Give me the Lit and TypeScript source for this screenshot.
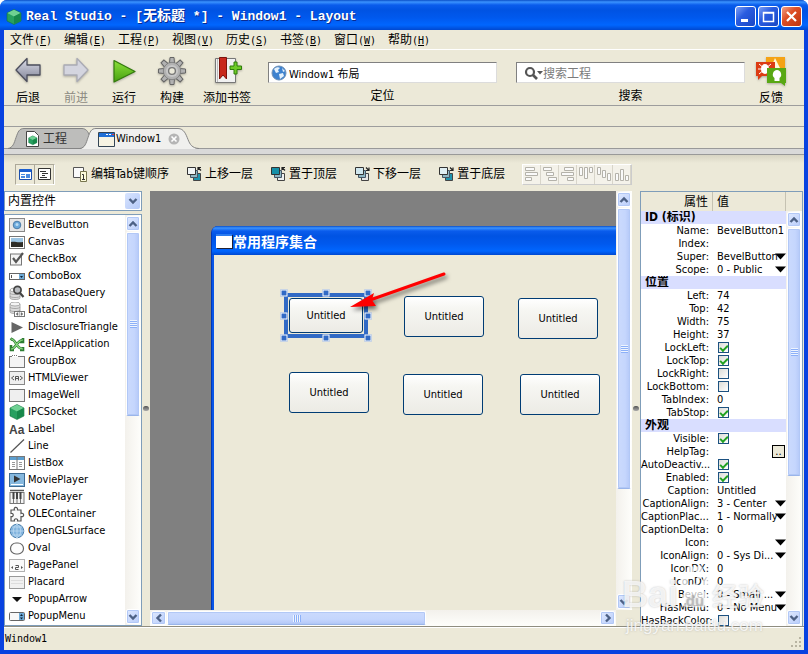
import { LitElement, html, css, svg, nothing } from "lit";
import { customElement, property } from "lit/decorators.js";
import { classMap } from "lit/directives/class-map.js";
import { styleMap } from "lit/directives/style-map.js";

const chevron = svg`<path d="M1.500 6 5 2.500 8.500 6" fill="none" stroke="#4d6185" stroke-width="2.400"/>`;

@customElement("xp-scrollbar")
class XpScrollbar extends LitElement {
  @property({ type: Boolean, reflect: true }) horizontal = false;
  @property({ type: Number }) share = 50;

  static styles = css`
    :host { display: flex; flex-direction: column; width: 16px; flex: none; min-height: 0;
      background: linear-gradient(90deg, #f3f1ec, #fefefb); box-sizing: border-box; padding: 1px; gap: 1px; }
    :host([horizontal]) { flex-direction: row; width: auto; height: 16px; background: linear-gradient(#f3f1ec, #fefefb); }
    button, .thumb { box-sizing: border-box; border: 1px solid #fff; border-radius: 2px;
      box-shadow: inset 0 0 0 1px #b2c8f6; }
    button { width: 14px; height: 15px; flex: none; padding: 0; display: grid; place-items: center;
      background: linear-gradient(135deg, #dfe9ff, #b9cdfa); }
    :host([horizontal]) button { width: 15px; height: 14px; }
    svg { width: 10px; height: 8px; display: block; }
    .down svg { transform: rotate(180deg); }
    :host([horizontal]) .up svg { transform: rotate(-90deg); }
    :host([horizontal]) .down svg { transform: rotate(90deg); }
    .track { flex: 1; min-height: 0; min-width: 0; display: flex; flex-direction: inherit; }
    .thumb { display: grid; place-items: center; background: linear-gradient(90deg, #cbdafd, #c5d6fd 60%, #b4c8f8);
      border-bottom-color: #9ab5ea; }
    :host([horizontal]) .thumb { background: linear-gradient(#cbdafd, #c5d6fd 60%, #b4c8f8); }
    .grip { width: 7px; height: 8px; background: repeating-linear-gradient(#eef4fe 0 1px, #8cb0f8 1px 2px); }
    :host([horizontal]) .grip { width: 8px; height: 7px; background: repeating-linear-gradient(90deg, #eef4fe 0 1px, #8cb0f8 1px 2px); }
  `;

  render() {
    return html`
      <button class="up" aria-label="Scroll back"><svg viewBox="0 0 10 8">${chevron}</svg></button>
      <div class="track"><div class="thumb" style=${styleMap({ flexBasis: this.share + "%" })}><div class="grip"></div></div></div>
      <button class="down" aria-label="Scroll forward"><svg viewBox="0 0 10 8">${chevron}</svg></button>`;
  }
}

const cube = svg`<path d="M8 .5 15 4v8l-7 3.500L1 12V4z" fill="#27a060" stroke="#13703c" stroke-width=".6"/><path d="M8 .8 14.700 4 8 7.500 1.300 4z" fill="#6fd193"/><path d="M8 7.500V15l6.700-3.300V4z" fill="#17884a"/>`;
const db = svg`<path d="M1 5v8c0 2 10 2 10 0V5" fill="#ddd" stroke="#999" stroke-width=".8"/><ellipse cx="6" cy="5" rx="5" ry="2" fill="#f5f5f5" stroke="#999" stroke-width=".8"/><path d="M1 8c0 2 10 2 10 0M1 11c0 2 10 2 10 0" fill="none" stroke="#999" stroke-width=".8"/>`;

const widgets: [string, unknown][] = [
  ["BevelButton", svg`<rect x=".5" y="1.500" width="15" height="13" fill="#e6e6e6" stroke="#888"/><circle cx="8" cy="8" r="3.800" fill="#6aa9dc" stroke="#4c7ba6"/><circle cx="8" cy="7.500" r="1.500" fill="#b9dbf3"/>`],
  ["Canvas", svg`<rect x=".5" y="2.500" width="15" height="12" fill="#fff" stroke="#777"/><path d="M2 4h12v5H2z" fill="#9cc4e2"/><path d="M2 8c4-1 6 1 12 0v5H2z" fill="#2e2c26"/>`],
  ["CheckBox", svg`<rect x="1.500" y="3" width="11" height="11" fill="#f4f4f4" stroke="#777"/><path d="m4 7 3 4 7-9" fill="none" stroke="#555" stroke-width="2.200"/>`],
  ["ComboBox", svg`<rect x=".5" y="5.500" width="15" height="6" fill="#fff" stroke="#666"/><path d="M10 6h5v5h-5z" fill="#6eaad6"/><path d="m11 8 1.500 2L14 8z" fill="#123"/><path d="M2.500 7v3" stroke="#555"/>`],
  ["DatabaseQuery", svg`${db}<circle cx="8.500" cy="5" r="3.600" fill="#b9bcc0" stroke="#444" stroke-width="1.700"/><path d="m11 8 3.500 4" stroke="#444" stroke-width="2.200"/>`],
  ["DataControl", svg`<g transform="translate(0 -3)">${db}</g><rect x="5.500" y="9.500" width="10" height="5" fill="#fff" stroke="#777"/><path d="M10.500 9v6M9 10.500 7 12l2 1.500zM12 10.500l2 1.500-2 1.500z" fill="#666" stroke="#777" stroke-width=".5"/>`],
  ["DisclosureTriangle", svg`<path d="M2.500 3v11L14 8.500z" fill="#666"/>`],
  ["ExcelApplication", svg`<path d="M2 3c5 0 5 10 12 10M2 13c5 0 6-9 12-9M1.500 4l2-1.500M2 9v5h3M14 2v4h-3M11 14h3v-3" fill="none" stroke="#2e7d32" stroke-width="2.600"/><path d="M2 3c5 0 5 10 12 10M2 13c5 0 6-9 12-9" fill="none" stroke="#8fdc83" stroke-width="1.200"/>`],
  ["GroupBox", svg`<rect x=".5" y="3.500" width="15" height="11" fill="#f4f4f4" stroke="#777"/><path d="M3 3.500h6" stroke="#fff"/><path d="M3 2.500h5" stroke="#777" stroke-dasharray="1 1"/>`],
  ["HTMLViewer", svg`<rect x=".5" y="1.500" width="15" height="13" fill="#efefef" stroke="#888"/><path d="M5 6 2.500 8 5 10M11 6l2.500 2L11 10M6.500 10.500v-4h3v4M6.500 8.500h3" fill="none" stroke="#555"/>`],
  ["ImageWell", svg`<rect x=".5" y="2.500" width="15" height="12" fill="#efefef" stroke="#777"/>`],
  ["IPCSocket", cube],
  ["Label", svg`<text x="0" y="12.500" font-family="Liberation Sans, sans-serif" font-weight="bold" font-size="12" fill="#444">Aa</text>`],
  ["Line", svg`<path d="M1.500 14.500 15 1.500" stroke="#555" stroke-width="1.200"/>`],
  ["ListBox", svg`<rect x=".5" y="1.500" width="15" height="13" fill="#fff" stroke="#777"/><path d="M1 2h14v3H1z" fill="#5c9fd0"/><path d="M8 2v12" stroke="#777"/><path d="M3 7.500h3M3 9.500h3M3 11.500h3M10 7.500h3M10 9.500h3M10 11.500h3" stroke="#999"/>`],
  ["MoviePlayer", svg`<rect x=".5" y="1.500" width="15" height="13" fill="#86b8de" stroke="#3d6b93"/><path d="M5 3.500v7L11.500 7z" fill="#333"/><path d="M2 12.500h12" stroke="#fff"/>`],
  ["NotePlayer", svg`<path d="M1 1.500h14" stroke="#555" stroke-width="1.500"/><rect x="1" y="3.500" width="14" height="11" fill="#f4f4f4" stroke="#777"/><path d="M4.500 3v7M8 3v7M11.500 3v7" stroke="#444" stroke-width="2"/><path d="M4.500 10v5M8 10v5M11.500 10v5" stroke="#777"/>`],
  ["OLEContainer", svg`<path d="M2 4h3.500C4 1 9 0 8.500 4H12v3.500c3-1.500 4 4 0 3V15H8.500c1-3-4-3-3 0H2v-4.500c3 .5 3-3.500 0-3z" fill="#fafafa" stroke="#555" stroke-width="1.200"/>`],
  ["OpenGLSurface", svg`<circle cx="8" cy="8" r="6.800" fill="#82b4de" stroke="#4b7fac"/><path d="M1 8h14M3 4h10M3 12h10M8 1v14M8 1c-5 4-5 10 0 14M8 1c5 4 5 10 0 14" fill="none" stroke="#c5e0f5" stroke-width=".7"/>`],
  ["Oval", svg`<rect x="1.500" y="3" width="13" height="11" rx="5.500" fill="#fdfdfd" stroke="#666" stroke-width="1.200"/>`],
  ["PagePanel", svg`<rect x=".5" y="2.500" width="15" height="12" fill="#fafafa" stroke="#666" stroke-dasharray="1 1"/><path d="M4 9 2 10.500 4 12zM12 9l2 1.500-2 1.500z" fill="#555"/><path d="M6.500 8.500h3v2h-3v2h3" fill="none" stroke="#555"/>`],
  ["Placard", svg`<rect x=".5" y="2.500" width="15" height="12" fill="#f1f1f1" stroke="#999"/><path d="M2 6.500h12M2 9.500h12" stroke="#ddd"/>`],
  ["PopupArrow", svg`<path d="M3 6h10l-5 5z" fill="#111"/>`],
  ["PopupMenu", svg`<rect x=".5" y="4.500" width="15" height="8" rx="1" fill="#f8f8f8" stroke="#666"/><path d="M10 5h5v7h-5z" fill="#6eaad6"/><path d="m11 8 1.500-2L14 8zM11 9.500l1.500 2 1.500-2z" fill="#123"/>`],
];

type Kind = "text" | "list" | "check" | "more";
const properties: { title: string; rows: [string, Kind, string][] }[] = [
  { title: "ID (标识)", rows: [["Name", "text", "BevelButton1"], ["Index", "text", ""], ["Super", "list", "BevelButton"], ["Scope", "list", "0 - Public"]] },
  { title: "位置", rows: [["Left", "text", "74"], ["Top", "text", "42"], ["Width", "text", "75"], ["Height", "text", "37"], ["LockLeft", "check", "on"], ["LockTop", "check", "on"], ["LockRight", "check", ""], ["LockBottom", "check", ""], ["TabIndex", "text", "0"], ["TabStop", "check", "on"]] },
  { title: "外观", rows: [["Visible", "check", "on"], ["HelpTag", "more", ""], ["AutoDeactiv...", "check", "on"], ["Enabled", "check", "on"], ["Caption", "text", "Untitled"], ["CaptionAlign", "list", "3 - Center"], ["CaptionPlac...", "list", "1 - Normally"], ["CaptionDelta", "text", "0"], ["Icon", "list", ""], ["IconAlign", "list", "0 - Sys Di..."], ["IconDX", "text", "0"], ["IconDY", "text", "0"], ["Bevel", "list", "0 - Small ..."], ["HasMenu", "list", "0 - No Menu"], ["HasBackColor", "check", ""]] },
];

const menus = [["文件", "F"], ["编辑", "E"], ["工程", "P"], ["视图", "V"], ["历史", "S"], ["书签", "B"], ["窗口", "W"], ["帮助", "H"]];

const gearTeeth = [0, 45, 90, 135, 180, 225, 270, 315];
const mainTools: { label: string; off?: boolean; icon: unknown }[] = [
  { label: "后退", icon: svg`<path d="M3 14 14 2.500V9h13v10H14v6.500z" fill="url(#steel)" stroke="#4b4d5c" stroke-width="1.300" stroke-linejoin="round"/>` },
  { label: "前进", off: true, icon: svg`<path d="M27 14 16 2.500V9H3v10h13v6.500z" fill="#d4d5df" stroke="#a9aab4" stroke-width="1.300" stroke-linejoin="round"/>` },
  { label: "运行", icon: svg`<path d="M5 4.500 26 15.500 5 26z" fill="url(#leaf)" stroke="#327a0c" stroke-width="1.200" stroke-linejoin="round"/>` },
  { label: "构建", icon: svg`<g fill="#b2b2b2" stroke="#666">${gearTeeth.map((a) => svg`<path d="M12.500 7 13 1.500h4l.5 5.500z" transform=${`rotate(${a} 15 15)`}/>`)}</g><circle cx="15" cy="15" r="8.700" fill="#b2b2b2" stroke="#777" stroke-width=".7"/><circle cx="15" cy="15" r="6" fill="#c8c8c8"/><circle cx="15" cy="15" r="3.400" fill="#ebe9da" stroke="#777" stroke-width="1.400"/>` },
  { label: "添加书签", icon: svg`<path d="M3.500 2.500h20v24h-20z" fill="#f1f1f1" stroke="#777"/><path d="M5.500 3v23" stroke="#bbb"/><path d="M7.500 1.500h7V23L11 19l-3.500 4z" fill="#c8281c" stroke="#7d130d"/><path d="M22 6h3v4h4.500v3.500H25V18h-3v-4.500h-4V10h4z" fill="#6ecb26" stroke="#2f7d0a"/>` },
];

const layerIcon = (back: string, front: string, arrow: string) => svg`
  <path d="M7.500 7.500h7v7h-7z" fill=${front} stroke="#444"/>
  <path d="M4.500 4.500h7v7h-7z" fill="#8fb6c3" stroke="#456"/>
  <path d="M1.500 1.500h8v7h-8z" fill=${back} stroke="#333"/>
  <path d=${arrow} fill="none" stroke="#222" stroke-width="1.200"/>`;
const upArrow = "M12 4V1.500h3M12 1.500l3 3";
const dnArrow = "M12 1.500l3 3M15 1.500v3h-3";
const layerTools: { label: string; icon: unknown }[] = [
  { label: "编辑Tab键顺序", icon: svg`<path d="M1.500 1.500h10v10h-10z" fill="#fafafa" stroke="#555"/><path d="M8.500 5.500h6v10h-6z" fill="#fdfbdc" stroke="#77754f"/><path d="M10 8.500h1.500V13M10 13.500h3" fill="none" stroke="#333"/>` },
  { label: "上移一层", icon: layerIcon("#f0f4f5", "#1d94ae", upArrow) },
  { label: "置于顶层", icon: layerIcon("#1690a8", "#eef1f2", upArrow) },
  { label: "下移一层", icon: layerIcon("#cfe6ee", "#e6e6e6", dnArrow) },
  { label: "置于底层", icon: layerIcon("#dfeef3", "#1d94ae", dnArrow) },
];

const alignTools: [string, string][] = [
  ["Align left", "M1.500 1.500h9v3h-9zM1.500 6.500h12v3h-12zM1.500 11.500h6v3h-6z"],
  ["Align centre", "M1.500 1.500h8v3h-8zM4.500 6.500h7v3h-7zM6.500 11.500h8v3h-8z"],
  ["Align right", "M4.500 1.500h9v3h-9zM1.500 6.500h12v3h-12zM7.500 11.500h6v3h-6z"],
  ["Align top", "M1.500 1.500h3v8h-3zM6.500 1.500h3v11h-3zM11.500 1.500h3v5h-3z"],
  ["Align middle", "M1.500 1.500h3v7h-3zM6.500 4.500h3v7h-3zM11.500 7.500h3v7h-3z"],
  ["Align bottom", "M1.500 7.500h3v7h-3zM6.500 3.500h3v11h-3zM11.500 9.500h3v5h-3z"],
];

const placed = [
  { x: 75, y: 43, w: 74, h: 35, picked: true },
  { x: 190, y: 41, w: 80, h: 41 },
  { x: 304, y: 43, w: 80, h: 41 },
  { x: 75, y: 117, w: 80, h: 41 },
  { x: 189, y: 119, w: 80, h: 41 },
  { x: 306, y: 119, w: 80, h: 41 },
];
const handles = [[0, 0], [50, 0], [100, 0], [0, 50], [100, 50], [0, 100], [50, 100], [100, 100]];

@customElement("app-root")
class AppRoot extends LitElement {
  static styles = css`
    :host { display: block; --face: #ece9d8; --ui: "DejaVu Sans Condensed", "DejaVu Sans", "Noto Sans CJK SC", sans-serif;
      font: 12px/16px "Liberation Sans", "Noto Sans CJK SC", sans-serif; color: #000; }
    * { box-sizing: border-box; }
    button, input, select { font: inherit; color: inherit; margin: 0; padding: 0; border: 0; background: none; border-radius: 0; }
    svg { display: block; flex: none; }
    .frame { height: 100vh; display: flex; flex-direction: column; background: #0842e0; overflow: hidden;
      border-radius: 7px 7px 0 0; position: relative; }
    .defs { position: absolute; width: 0; height: 0; }

    .title { height: 30px; flex: none; display: flex; align-items: center; padding: 3px 6px 0; gap: 2px; color: #fff;
      background: linear-gradient(#0a4fc8 0, #3b93ff 2px, #0a5cec 5px, #0053e3 10px, #0059ee 18px, #0066ff 25px, #0048d0 30px); }
    .title h1 { flex: 1; margin: 0 0 0 2px; font: bold 13px/20px "Liberation Mono", "Noto Sans CJK SC", monospace; text-shadow: 1px 1px #0a2a90; white-space: pre; }
    .title h1 span { font-size: 14px; }
    .caption { width: 21px; height: 21px; border: 1px solid #fff; border-radius: 3px; display: grid; place-items: center;
      background: linear-gradient(135deg, #7c9ff5, #2a5ce0 40%, #1846c4); }
    .caption.close { background: linear-gradient(135deg, #f0a088, #de4f26 40%, #bf3510); }

    .client { flex: 1; min-height: 0; margin: 0 4px 4px; display: flex; flex-direction: column; background: var(--face); }
    .menu { display: flex; gap: 12px; height: 20px; flex: none; padding: 0 6px; border-bottom: 1px solid #fff; align-items: center; }
    .menu button { width: 42px; text-align: left; white-space: nowrap; line-height: 18px; }
    .menu i { font: 10px/16px "DejaVu Sans Mono", monospace; }

    .tools { display: flex; height: 56px; flex: none; border-bottom: 1px solid #9d9d9d; padding-right: 9px; }
    .tool { width: 48px; display: flex; flex-direction: column; align-items: center; padding: 6px 0 0; gap: 4px; line-height: 16px; white-space: nowrap; }
    .tool svg { filter: drop-shadow(0 1px 1px #0004); }
    .tool.wide { width: 62px; }
    .tool.off { color: #8d8b82; }
    .field { flex: 1; min-width: 0; display: flex; flex-direction: column; padding-top: 12px; gap: 5px; text-align: center; }
    .tools .field { margin-left: 10px; }
    .tools .field + .field { margin: 0 2px 0 19px; }
    .box { display: flex; align-items: center; height: 21px; padding: 0 2px; gap: 2px; background: #fff; border: 1px solid #dcdcdc; border-top-color: #808080; border-left-color: #808080; }
    .box input { flex: 1; min-width: 0; font-family: var(--ui); font-size: 11px; height: 18px; outline: 0; }
    .box.search { padding-left: 7px; gap: 0; }
    .box.search input { font: 12px/18px "Noto Sans CJK SC", sans-serif; }
    .box input::placeholder { color: #7b7b7b; opacity: 1; }
    .gap { height: 21px; flex: none; border-bottom: 1px solid #9d9d9d; }
    .tabs { height: 22px; flex: none; display: flex; padding-left: 4px; border-bottom: 1px solid #999; }
    .tab { position: relative; height: 22px; display: flex; align-items: center; padding-top: 2px; white-space: nowrap; }
    .tab .shape { position: absolute; left: 0; top: 0; }
    .tab > :not(.shape) { position: relative; }
    .tab.rest { width: 82px; padding-left: 17px; gap: 3px; color: #333; }
    .tab.live { width: 120px; margin-left: -10px; padding-left: 18px; gap: 1px; font: 11px/16px var(--ui); }
    .tab.live .x { margin-left: 6px; }
    .band { height: 6px; flex: none; background: #d9d9d9; border-bottom: 1px solid #999; }

    .layers { height: 36px; flex: none; display: flex; align-items: center; gap: 17px; padding: 2px 11px 0; background: linear-gradient(#d8d5c4, var(--face) 8px); }
    .views, .aligns { display: flex; height: 21px; border: 1px solid; border-color: #aca899 #fff #fff #aca899; }
    .views button { width: 19px; display: grid; place-items: center; border-right: 1px solid #aca899; }
    .views button + button { border-color: #b9b6a6; }
    .layer { display: flex; align-items: center; gap: 2px; height: 22px; white-space: nowrap; font: 12px/16px "DejaVu Sans Condensed", "Noto Sans CJK SC", sans-serif; }
    .aligns { border-color: #fff #ccc #ccc #fff; background: #f4f2ea; }
    .aligns button { width: 18px; display: grid; place-items: center; border-right: 1px solid #d8d5ca; }

    .main { flex: 1; min-height: 0; display: grid; grid-template-columns: 138px 8px minmax(0, 1fr) 8px 163px; padding-right: 1px; border-bottom: 1px solid #8f8d80; }
    .left { display: flex; flex-direction: column; gap: 3px; min-height: 0; }
    .combo { position: relative; height: 20px; flex: none; border: 1px solid #7f9db9; background: #fff; }
    .combo select { appearance: none; width: 100%; height: 18px; padding-left: 3px; }
    .combo .drop { position: absolute; right: 1px; top: 1px; width: 15px; height: 16px; border-radius: 2px; display: grid; place-items: center; background: linear-gradient(135deg, #d8e4fe, #b4c9f8); pointer-events: none; }
    .drop svg { transform: rotate(180deg); }
    .list { flex: 1; min-height: 0; display: flex; border: 1px solid #7f9db9; background: #fff; }
    .list ul { flex: 1; min-width: 0; margin: 0; padding: 1px 0 0; list-style: none; overflow: hidden; }
    .list li button { display: flex; align-items: center; gap: 3px; height: 17px; width: 100%; padding-left: 4px; font: 11px/17px var(--ui); white-space: nowrap; }
    .split { display: grid; place-items: center; }
    .split::before { content: ""; width: 6px; height: 5px; border-radius: 3px; background: linear-gradient(#555, #aaa); }

    .stage { display: grid; grid-template: minmax(0, 1fr) 16px / minmax(0, 1fr) 16px; min-height: 0; }
    .canvas { background: #808080; overflow: hidden; padding: 35px 0 0 61px; display: flex; }
    .win { flex: 1; min-width: 0; display: flex; flex-direction: column; background: #0855e8; border-left: 1px solid #0038b8; padding-left: 2px; border-radius: 7px 0 0 0; }
    .win header { height: 29px; flex: none; margin-left: -2px; padding-left: 4px; display: flex; align-items: center; gap: 1px; color: #fff; border-radius: 6px 0 0 0;
      font: bold 14px/20px "Noto Sans CJK SC", sans-serif; background: linear-gradient(#0a4fc8 0, #3b93ff 2px, #0a5cec 5px, #0053e3 10px, #0059ee 18px, #0066ff 25px, #0048d0 29px); }
    .blank { width: 16px; height: 14px; background: #fff; border-top: 2px solid #2a7bf0; box-shadow: 1px 1px #223; }
    .body { position: relative; flex: 1; background: var(--face); }
    .item { position: absolute; font: 11px/16px var(--ui); border: 1px solid #003c74; border-radius: 3px; background: linear-gradient(#fff, #f6f6f2 30%, #ecebe5); }
    .ring { position: absolute; inset: -6px; box-shadow: inset 0 0 0 4px #316ac5; pointer-events: none; }
    .ring i { position: absolute; width: 7px; height: 7px; background: #316ac5; border: 1px solid #fff; transform: translate(-50%, -50%); }
    .arrow { position: absolute; left: 130px; top: 10px; pointer-events: none; filter: drop-shadow(2px 3px 2px #0008); }

    .props { display: flex; flex-direction: column; min-height: 0; border: 1px solid #7f9db9; border-bottom: 0; background: #fff; font: 11px/13px var(--ui); }
    .phead { display: grid; grid-template-columns: 72px 73px 1fr; height: 19px; flex: none; background: var(--face); font: 12px/18px "Noto Sans CJK SC", sans-serif; }
    .phead span { border-right: 1px solid #c5c2b2; padding-left: 4px; }
    .phead span:first-child { text-align: right; padding-right: 4px; }
    .phead span:last-child { border-right: 0; }
    .pbody { flex: 1; min-height: 0; display: flex; }
    .clip { flex: 1; min-width: 0; overflow: hidden; }
    table { width: 100%; border-collapse: collapse; table-layout: fixed; }
    .keys { width: 72px; }
    tr, td, th { height: 13px; }
    td, th { padding: 0; font-weight: normal; line-height: 13px; white-space: nowrap; vertical-align: top; }
    .key { text-align: right; padding-right: 4px; overflow: hidden; }
    .key.long { text-align: left; padding-right: 0; }
    .cat { background: #d9deff; font: bold 12px/13px "DejaVu Sans Condensed", "Noto Sans CJK SC", sans-serif; text-align: left; padding-left: 4px; overflow: hidden; }
    .cat div { height: 13px; overflow: hidden; }
    .val { position: relative; display: flex; align-items: center; height: 13px; padding-left: 4px; }
    .val input[type="text"], .val select { appearance: none; width: 100%; height: 13px; line-height: 13px; outline: 0; }
    .val svg { position: absolute; right: 0; top: 3px; pointer-events: none; }
    .val input[type="checkbox"] { appearance: none; width: 11px; height: 11px; border: 1px solid #1c5180; background: linear-gradient(135deg, #dcdcd7, #fff); display: grid; place-items: center; margin-left: 1px; }
    .val input:checked::before { content: ""; width: 6px; height: 3px; border: solid #21a121; border-width: 0 0 2px 2px; transform: rotate(-45deg); }
    .more { margin-left: auto; width: 13px; height: 13px; line-height: 8px; border: 1px solid #000; background: var(--face); margin-right: 1px; }

    .status { height: 23px; flex: none; display: flex; align-items: center; justify-content: space-between; padding-left: 1px; font: 10px/16px "DejaVu Sans Mono", monospace; border-top: 1px solid #fff; }
    .status svg { align-self: flex-end; }
    .mark { position: absolute; right: 44px; bottom: 18px; color: #fffc; pointer-events: none; white-space: nowrap; text-shadow: 0 0 2px #8888; display: flex; flex-direction: column; }
    .mark b { display: flex; align-items: center; height: 42px; font: bold 36px/42px "Liberation Sans", sans-serif; }
    .mark b span { font: 500 26px/42px "Noto Sans CJK SC", sans-serif; }
    .mark .paw { position: relative; display: grid; place-items: center; }
    .mark .paw svg { margin-top: -14px; }
    .mark em { position: absolute; bottom: 4px; font: bold 15px/16px "Liberation Sans", sans-serif; color: #9996; }
    .mark small { font: 17px/20px "Liberation Sans", sans-serif; padding-left: 4px; }
  `;

  private value([name, kind, value]: [string, Kind, string]) {
    const id = "p-" + name;
    if (kind === "text") return html`<input id=${id} type="text" .value=${value} />`;
    if (kind === "check") return html`<input id=${id} type="checkbox" .checked=${!!value} />`;
    if (kind === "more") return html`<button id=${id} class="more">..</button>`;
    return html`<select id=${id}><option>${value}</option></select><svg width="11" height="7" viewBox="0 0 11 7"><path d="M0 .5h11L5.500 6.500z"/></svg>`;
  }

  render() {
    return html`
      <div class="frame">
        <svg class="defs"><defs>
          <linearGradient id="steel" x2="0" y2="1"><stop stop-color="#dcdde8"/><stop offset="1" stop-color="#7f8296"/></linearGradient>
          <linearGradient id="leaf" x2="0" y2="1"><stop stop-color="#8be03a"/><stop offset="1" stop-color="#47a010"/></linearGradient>
        </defs></svg>
        <header class="title">
          <svg width="16" height="16" viewBox="0 0 16 16">${cube}</svg>
          <h1>Real Studio - [<span>无标题</span> *] - Window1 - Layout</h1>
          <button class="caption" aria-label="Minimize"><svg width="13" height="13"><path d="M2 9h7v3H2z" fill="#fff"/></svg></button>
          <button class="caption" aria-label="Maximize"><svg width="13" height="13"><path d="M1.500 2.500h10v9h-10zM1 3h11" fill="none" stroke="#fff" stroke-width="1.500"/></svg></button>
          <button class="caption close" aria-label="Close"><svg width="13" height="13"><path d="m2 2 9 9M11 2l-9 9" stroke="#fff" stroke-width="2.200"/></svg></button>
        </header>
        <div class="client">
          <nav class="menu">${menus.map(([t, k]) => html`<button>${t}<i>(<u>${k}</u>)</i></button>`)}</nav>
          <div class="tools">
            ${mainTools.map((t) => html`<button class=${classMap({ tool: true, off: !!t.off, wide: t.label.length > 2 })}>
              <svg width="30" height="30" viewBox="0 0 30 30">${t.icon}</svg>${t.label}</button>`)}
            <div class="field">
              <div class="box">
                <svg width="16" height="16" viewBox="0 0 16 16"><circle cx="8" cy="8" r="7" fill="#3d82cf" stroke="#6e90b5"/><path d="M3 4c2-2 5-2 6-1L7 5l1 2-3 1zM8 9l4-1 1 3-4 3zM11 3l3 3-2 1z" fill="#e6f2fc"/></svg>
                <input id="loc" type="text" .value=${"Window1 布局"} />
              </div>
              <label for="loc">定位</label>
            </div>
            <div class="field">
              <div class="box search">
                <svg width="19" height="14" viewBox="0 0 19 14"><circle cx="6" cy="6" r="4" fill="none" stroke="#555" stroke-width="2.200"/><path d="m9 9 4 4" stroke="#555" stroke-width="2.600"/><path d="M13 5h6l-3 3.500z" fill="#555"/></svg>
                <input id="find" type="text" placeholder="搜索工程" />
              </div>
              <label for="find">搜索</label>
            </div>
            <button class="tool"><svg width="32" height="30" viewBox="0 0 32 30"><path d="M11 1h19v15H11z" fill="#f5a315"/><path d="m20 2 6 12H15z" fill="#fff8dc"/><path d="M1 6h19v14H7l-4 4v-4H1z" fill="#dc3c14"/><ellipse cx="10" cy="13" rx="4" ry="5" fill="#fff"/><path d="m4 8 12 10M16 8 4 18M3 13h14" stroke="#fff"/><path d="M12 12h19v15h-1v3l-4-3H12z" fill="#59a814"/><path d="M22 14a4.500 4.500 0 0 1 2.500 8v3h-5v-3a4.500 4.500 0 0 1 2.500-8z" fill="#fff"/></svg>反馈</button>
          </div>
          <div class="gap"></div>
          <div class="tabs">
            <button class="tab rest">
              <svg class="shape" width="84" height="22"><path d="M0 21.500c5-1 6-5 8-11C10 5 11 1.500 16 1.500h58c5 0 7 5 8 9v11z" fill="#bdbdbb" stroke="#858585"/></svg>
              <svg width="15" height="16" viewBox="0 0 15 16"><path d="M1.500.5h8l4 4v11h-12z" fill="#fff" stroke="#444"/><g transform="translate(3 4.500) scale(.6)">${cube}</g></svg><span>工程</span>
            </button>
            <button class="tab live">
              <svg class="shape" width="120" height="22"><path d="M0 22c5-1 6-5 8-11C10 5 11 1.500 16 1.500h82c6 0 8 6 10 11 2 5 4 9 11 9.500z" fill="#f0f0ee"/><path d="M0 21.500c5-1 6-5 8-11C10 5 11 1.500 16 1.500h82c6 0 8 6 10 11 2 5 4 8.500 11 9" fill="none" stroke="#858585"/></svg>
              <svg width="17" height="15" viewBox="0 0 17 15"><path d="M.5.5h16v14H.5z" fill="#f6f3e3" stroke="#345"/><path d="M1 1h15v4H1z" fill="#1f6fd6"/><path d="M8 2h2v1H8zM11 2h2v1h-2z" fill="#fff"/><path d="M14 2h2v1h-2z" fill="#e33"/></svg><span>Window1</span>
              <svg class="x" width="12" height="12" viewBox="0 0 12 12"><circle cx="6" cy="6" r="5.500" fill="#b5b5b5"/><path d="m3.500 3.500 5 5M8.500 3.500l-5 5" stroke="#fff" stroke-width="1.600"/></svg>
            </button>
          </div>
          <div class="band"></div>
          <div class="layers">
            <div class="views">
              <button aria-label="Layout"><svg width="13" height="13"><path d="M.5 1.500h12v10H.5z" fill="#fff" stroke="#1b4fae"/><path d="M1 1h11v3H1z" fill="#1b5fd0"/><path d="M2 6h4v1H2zM2 8h4v2H2zM7 6h4v4H7z" fill="#4a8ae0"/></svg></button>
              <button aria-label="Code"><svg width="13" height="13"><path d="M.5.500h12v11H.5z" fill="#fff" stroke="#333"/><path d="M2 3.500h6M4 5.500h6M4 7.500h3M2 9.500h7" stroke="#333"/></svg></button>
            </div>
            ${layerTools.map((t) => html`<button class="layer"><svg width="17" height="16" viewBox="0 0 17 16">${t.icon}</svg>${t.label}</button>`)}
            <div class="aligns">${alignTools.map(([n, d]) => html`<button aria-label=${n}><svg width="16" height="16" viewBox="0 0 16 16"><path d=${d} fill="#fafafa" stroke="#b4b2aa"/></svg></button>`)}</div>
          </div>
          <main class="main">
            <section class="left">
              <div class="combo"><select aria-label="控件"><option>内置控件</option></select><span class="drop"><svg width="10" height="8" viewBox="0 0 10 8">${chevron}</svg></span></div>
              <div class="list">
                <ul>${widgets.map(([n, i]) => html`<li><button><svg width="16" height="16" viewBox="0 0 16 16">${i}</svg>${n}</button></li>`)}</ul>
                <xp-scrollbar .share=${49}></xp-scrollbar>
              </div>
            </section>
            <div class="split"></div>
            <section class="stage">
              <div class="canvas">
                <div class="win">
                  <header><span class="blank"></span>常用程序集合</header>
                  <div class="body">
                    ${placed.map((p) => html`<button class="item" style=${styleMap({ left: p.x + "px", top: p.y + "px", width: p.w + "px", height: p.h + "px" })}>Untitled${p.picked
                      ? html`<span class="ring">${handles.map(([l, t]) => html`<i style=${styleMap({ left: l + "%", top: t + "%" })}></i>`)}</span>`
                      : nothing}</button>`)}
                    <svg class="arrow" width="110" height="50"><path d="m100 9-74 26" stroke="#f00" stroke-width="3" stroke-linecap="round"/><path d="M6 42 30 28l-2 7 4 6z" fill="#f00"/></svg>
                  </div>
                </div>
              </div>
              <xp-scrollbar .share=${73}></xp-scrollbar>
              <xp-scrollbar horizontal .share=${60}></xp-scrollbar>
            </section>
            <div class="split"></div>
            <section class="props">
              <div class="phead"><span>属性</span><span>值</span><span></span></div>
              <div class="pbody">
                <div class="clip"><table>
                  <colgroup><col class="keys" /><col /></colgroup>
                  ${properties.map((g) => html`<tbody><tr><th class="cat" colspan="2"><div>${g.title}</div></th></tr>
                    ${g.rows.map((r) => html`<tr><th class=${classMap({ key: true, long: r[0].endsWith("...") })}><label for=${"p-" + r[0]}>${r[0]}${r[0].endsWith("...") ? "" : ":"}</label></th><td><div class="val">${this.value(r)}</div></td></tr>`)}</tbody>`)}
                </table></div>
                <xp-scrollbar .share=${65}></xp-scrollbar>
              </div>
            </section>
          </main>
          <footer class="status"><span>Window1</span><svg width="14" height="14"><path d="M9 1h2v2H9zM5 5h2v2H5zM9 5h2v2H9zM1 9h2v2H1zM5 9h2v2H5zM9 9h2v2H9z" fill="#b8b4a2"/></svg></footer>
        </div>
        <div class="mark"><b>Bai<span class="paw"><svg width="34" height="50" viewBox="0 0 30 44"><g fill="#fffb"><ellipse cx="5" cy="17" rx="3.500" ry="5"/><ellipse cx="11" cy="8" rx="3.500" ry="6"/><ellipse cx="19" cy="8" rx="3.500" ry="6"/><ellipse cx="25" cy="17" rx="3.500" ry="5"/><path d="M15 18c5 0 12 10 12 16 0 6-7 5-12 5S3 40 3 34c0-6 7-16 12-16z"/></g></svg><em>du</em></span><span>经验</span></b><small>jingyan.baidu.com</small></div>
      </div>`;
  }
}
